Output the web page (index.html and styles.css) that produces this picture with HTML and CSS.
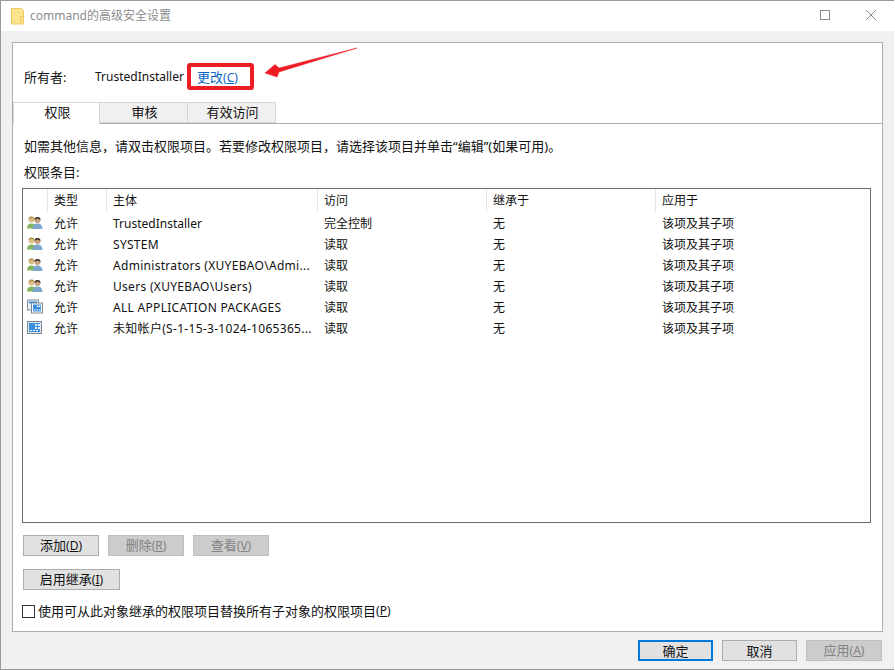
FILE: index.html
```html
<!DOCTYPE html>
<html lang="zh-CN">
<head>
<meta charset="utf-8">
<title>command的高级安全设置</title>
<link rel="stylesheet" href="styles.css">
</head>
<body>
<div class="window">
  <header class="titlebar">
    <svg class="folder" width="14" height="17" viewBox="0 0 14 17"><path d="M.5.5h10l2 2v13.500H.5z" fill="#fbe38f" stroke="#ecca5c"/><path d="M9.500 16V8.500h3" fill="#fbe38f" stroke="#ecca5c"/></svg>
    <span class="title">command的高级安全设置</span>
    <span class="spacer"></span>
    <span class="maximize"></span>
    <svg class="close" width="10" height="10" viewBox="0 0 10 10"><path d="M0 0l10 10M10 0L0 10" stroke="#8a8a8a" fill="none"/></svg>
  </header>
  <main class="body">
    <section class="panel">
      <div class="owner">
        <span class="owner-label">所有者:</span>
        <span class="owner-name">TrustedInstaller</span>
        <a class="owner-link">更改<span class="k">(<u>C</u>)</span></a>
      </div>
      <div class="tabs">
        <span class="tab tab-active">权限</span>
        <span class="tab tab-second">审核</span>
        <span class="tab tab-third">有效访问</span>
      </div>
      <p class="hint">如需其他信息&#xFF0C;请双击权限项目。若要修改权限项目&#xFF0C;请选择该项目并单击“编辑”(如果可用)。</p>
      <p class="list-label">权限条目:</p>
      <div class="list">
        <div class="row head">
          <span class="c0"></span><span class="c1">类型</span><span class="c2">主体</span><span class="c3">访问</span><span class="c4">继承于</span><span class="c5">应用于</span>
        </div>
        <div class="row">
          <span class="c0"><svg class="ic"><use href="#users"/></svg></span><span class="c1">允许</span><span class="c2">TrustedInstaller</span><span class="c3">完全控制</span><span class="c4">无</span><span class="c5">该项及其子项</span>
        </div>
        <div class="row">
          <span class="c0"><svg class="ic"><use href="#users"/></svg></span><span class="c1">允许</span><span class="c2 caps">SYSTEM</span><span class="c3">读取</span><span class="c4">无</span><span class="c5">该项及其子项</span>
        </div>
        <div class="row">
          <span class="c0"><svg class="ic"><use href="#users"/></svg></span><span class="c1">允许</span><span class="c2 caps">Administrators (XUYEBAO\Admi...</span><span class="c3">读取</span><span class="c4">无</span><span class="c5">该项及其子项</span>
        </div>
        <div class="row">
          <span class="c0"><svg class="ic"><use href="#users"/></svg></span><span class="c1">允许</span><span class="c2 caps">Users (XUYEBAO\Users)</span><span class="c3">读取</span><span class="c4">无</span><span class="c5">该项及其子项</span>
        </div>
        <div class="row">
          <span class="c0"><svg class="ic"><use href="#pack2"/></svg></span><span class="c1">允许</span><span class="c2 caps">ALL APPLICATION PACKAGES</span><span class="c3">读取</span><span class="c4">无</span><span class="c5">该项及其子项</span>
        </div>
        <div class="row">
          <span class="c0"><svg class="ic"><use href="#pack1"/></svg></span><span class="c1">允许</span><span class="c2 caps">未知帐户(S-1-15-3-1024-1065365...</span><span class="c3">读取</span><span class="c4">无</span><span class="c5">该项及其子项</span>
        </div>
      </div>
      <div class="btn-row">
        <button class="btn">添加<span class="k">(<u>D</u>)</span></button>
        <button class="btn off">删除<span class="k">(<u>R</u>)</span></button>
        <button class="btn off">查看<span class="k">(<u>V</u>)</span></button>
      </div>
      <button class="btn btn-wide">启用继承<span class="k">(<u>I</u>)</span></button>
      <label class="check"><span class="box"></span>使用可从此对象继承的权限项目替换所有子对象的权限项目<span class="k">(<u>P</u>)</span></label>
    </section>
    <footer class="footer">
      <button class="btn default">确定</button>
      <button class="btn">取消</button>
      <button class="btn off btn-apply">应用<span class="k">(<u>A</u>)</span></button>
    </footer>
  </main>
  <div class="mark"></div>
  <svg class="arrow" width="96" height="32" viewBox="0 0 96 32"><path d="M93 1L15 21l-4-3.500L1 26l12 4 2-5z" fill="#ee1c25" stroke="#ee1c25" stroke-width=".5" stroke-linejoin="round"/></svg>
</div>
<svg class="defs" width="0" height="0">
  <defs>
    <g id="users">
      <circle cx="5.500" cy="4.500" r="3" fill="#d9bf86"/>
      <path d="M2.500 4.500a3 3 0 0 1 6 0l-1-1h-4z" fill="#b9985a"/>
      <path d="M1 13.500c0-3.500 1.500-5 4.500-5s3.500 1 4.500 2v3z" fill="#86b35e"/>
      <circle cx="11.500" cy="5" r="3" fill="#c99f80"/>
      <path d="M8.500 5a3 3 0 0 1 6 0l-1-.5-2-1-2 1z" fill="#3d3228"/>
      <path d="M6.500 14c0-3.500 2-5.500 5-5.500s5 2 5 5.500z" fill="#7ba7cf"/>
    </g>
    <g id="pack1">
      <rect x="1.500" y="1.500" width="14" height="12" fill="#dfe7ee" stroke="#7f8790"/>
      <rect x="3" y="3" width="11" height="9" fill="#3a8fe0"/>
      <path d="M9 4h2v2H9zM12 4h2v2h-2zM9 7h2v2H9zM12 7h2v2h-2z" fill="#e8f3fd"/>
      <path d="M4 10h2v1H4zM7 10h2v1H7zM10 10h2v1h-2z" fill="#fff"/>
    </g>
    <g id="pack2">
      <rect x="1.500" y="1" width="11" height="10" fill="#e9f1f8" stroke="#7d8791"/>
      <rect x="3" y="2.500" width="8" height="2" fill="#3a8fe0"/>
      <rect x="5.500" y="4" width="11" height="10" fill="#fff" stroke="#7d8791"/>
      <rect x="7" y="5.500" width="8" height="7" fill="#3a8fe0"/>
      <path d="M11 6.500h1.500v1.500H11zM13 6.500h1.500v1.500H13zM8 10.500h1.500v1H8zM10.500 10.500H12v1h-1.500zM13 10.500h1.500v1H13z" fill="#fff"/>
    </g>
  </defs>
</svg>
</body>
</html>
```
FILE: styles.css
```css
* { box-sizing: border-box; }
html, body { margin: 0; height: 100%; }
body {
  width: 895px; height: 670px; overflow: hidden; background: #fff;
  font: 13px/16px "Noto Sans", "Noto Sans CJK SC", sans-serif; color: #111;
}
.window {
  position: relative; width: 894px; height: 670px; display: flex; flex-direction: column;
  background: #f0f0f0; border: 1px solid #9a9a9a; border-right: 0;
}
.titlebar {
  height: 30px; background: #fff; display: flex; align-items: center; padding: 0 18px 2px 10px; flex: none;
}
.folder { flex: none; margin-right: 5px; margin-top: 2px; }
.title { color: #8c8c8c; font-size: 12px; margin-top: 2px; }
.spacer { flex: 1; }
.maximize { width: 10px; height: 10px; border: 1px solid #8a8a8a; margin-right: 36px; }
.close { display: block; }
.body { flex: 1; display: flex; flex-direction: column; padding: 11px 11px 0 11px; }
.panel {
  height: 590px; background: #fff; border: 1px solid #adadad; padding: 0 10px 0 9px;
  display: flex; flex-direction: column; align-items: flex-start; flex: none;
}
.owner { display: flex; margin-top: 26px; height: 16px; width: 100%; }
.owner-label { width: 71px; margin-left: 2px; }
.owner-name { width: 102px; font-size: 12px; }
.owner-link { color: #0a66c2; }
.k { font-size: 12px; }
.tabs {
  display: flex; margin: 17px 0 0 -9px; width: calc(100% + 19px); height: 22px;
  border-bottom: 1px solid #adadad; flex: none;
}
.tab {
  height: 21px; background: #f0f0f0; border: 1px solid #d6d6d6; border-left: 0; text-align: center; line-height: 19px; padding-left: 2px;
}
.tab-active { width: 87px; background: #fff; height: 22px; border: 1px solid #d6d6d6; border-bottom: 0; }
.tab-second { width: 88px; }
.tab-third { width: 88px; }
.hint { margin: 14px 0 0 2px; white-space: nowrap; }
.list-label { margin: 10px 0 0 2px; }
.list {
  margin-top: 8px; width: 849px; height: 335px; background: #fff; border: 1px solid #6b6b6b; flex: none; font-size: 12px;
}
.row { display: flex; height: 21px; align-items: center; padding-top: 2px; }
.head { height: 23px; padding-top: 0; }
.head span { height: 23px; line-height: 23px; border-right: 1px solid #e5e5e5; }
.head .c5 { border-right: 0; }
.c0 { width: 25px; padding-left: 3px; display: flex; align-items: center; flex: none; margin-top: -2px; }
.head .c0 { margin-top: 0; }
.c1 { width: 59px; padding-left: 6px; flex: none; }
.c2 { width: 211px; padding-left: 6px; flex: none; white-space: nowrap; }
.caps { letter-spacing: .3px; }
.c3 { width: 169px; padding-left: 6px; flex: none; }
.c4 { width: 169px; padding-left: 6px; flex: none; }
.c5 { padding-left: 6px; flex: 1; }
.ic { width: 18px; height: 16px; display: block; }
.btn-row { display: flex; gap: 9px; margin-top: 12px; margin-left: 1px; }
.btn {
  font: inherit; color: #111; width: 76px; height: 21px; padding: 0; background: #e1e1e1;
  border: 1px solid #adadad; line-height: 18px;
}
.btn.off { background: #cccccc; border-color: #bfbfbf; color: #838383; }
.btn-wide { width: 97px; margin: 13px 0 0 1px; }
.check { display: flex; align-items: center; margin: 13px 0 0 0; white-space: nowrap; }
.box { width: 13px; height: 13px; border: 1px solid #333; background: #fff; margin-right: 3px; }
.footer { display: flex; justify-content: flex-end; gap: 9px; padding: 8px 0 0 0; margin-right: 1px; }
.footer .btn { width: 75px; }
.default { border: 2px solid #0078d7; }
.footer .btn-apply { width: 76px; }
.mark { position: absolute; left: 186px; top: 62px; width: 67px; height: 27px; border: 4px solid #ee1c25; border-radius: 3px; }
.arrow { position: absolute; left: 263px; top: 46px; }
.defs { position: absolute; }
```
